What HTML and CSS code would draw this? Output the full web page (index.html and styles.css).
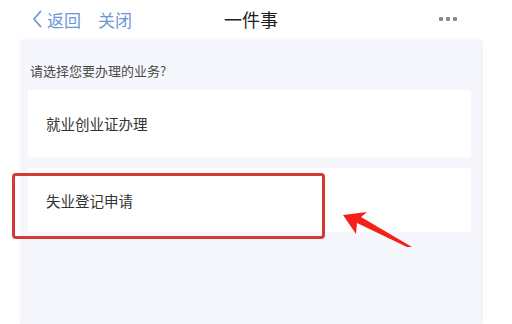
FILE: index.html
```html
<!DOCTYPE html>
<html lang="zh">
<head>
<meta charset="utf-8">
<link rel="stylesheet" href="styles.css">
</head>
<body>
<div class="page">
  <header class="nav">
    <div class="nav-left">
      <span class="back">
        <svg class="chev" width="10" height="18" viewBox="0 0 10 18"><path d="M8.5 1.5 L2 9 L8.5 16.5" fill="none" stroke="#6b98d3" stroke-width="1.8" stroke-linecap="round" stroke-linejoin="round"/></svg>
        返回
      </span>
      <span class="close">关闭</span>
    </div>
    <div class="title">一件事</div>
    <div class="more"><i></i><i></i><i></i></div>
  </header>
  <main class="panel">
    <p class="question">请选择您要办理的业务?</p>
    <div class="card card-first">就业创业证办理</div>
    <div class="card card-second">失业登记申请</div>
  </main>
  <div class="highlight"></div>
  <svg class="arrow" width="80" height="50" viewBox="0 0 80 50">
    <path d="M1 18 L25 15 L19 20 L70 50 L67 51 L15 26 L14 37 Z" fill="#f5201a"/>
  </svg>
</div>
</body>
</html>
```
FILE: styles.css
```css
* { box-sizing: border-box; }
html, body { margin: 0; padding: 0; background: #ffffff; }
body {
  font-family: "Noto Sans CJK SC", "Noto Sans", sans-serif;
  width: 512px;
  height: 324px;
  overflow: hidden;
}
.page { position: relative; width: 512px; height: 324px; }
.nav {
  height: 40px;
  display: flex;
  align-items: center;
  padding: 0 0 2px 32px;
  position: relative;
}
.nav-left { display: flex; align-items: center; gap: 17px; color: #6b98d3; font-size: 17px; }
.back { display: flex; align-items: center; gap: 5px; }
.chev { display: block; }
.title {
  position: absolute;
  left: 0; right: 0;
  top: 0; height: 38px;
  padding-right: 10px;
  display: flex; align-items: center; justify-content: center;
  font-size: 18px; color: #1e1e1e;
  pointer-events: none;
}
.more { margin-left: auto; margin-right: 55px; display: flex; gap: 3px; }
.more i { display: block; width: 4px; height: 4px; background: #8a8a8a; border-radius: 1px; }
.panel {
  margin: 0 31px 0 20px;
  height: 284px;
  background: #f5f7fc;
  padding: 22px 10px 0 8px;
  box-shadow: 1px 0 2px rgba(200,210,230,0.5);
}
.question {
  margin: 0 0 11px 2px;
  font-size: 13px;
  line-height: 17px;
  color: #4a4a4a;
}
.card {
  background: #ffffff;
  display: flex;
  align-items: center;
  padding-left: 18px;
  font-size: 14.5px;
  color: #333333;
}
.card-first { height: 67px; margin-bottom: 11px; }
.card-second { height: 64px; }
.highlight {
  position: absolute;
  left: 12px; top: 173px;
  width: 313px; height: 66px;
  border: 3.5px solid #d43a35;
  border-radius: 4px;
}
.arrow { position: absolute; left: 342px; top: 197px; }
```
